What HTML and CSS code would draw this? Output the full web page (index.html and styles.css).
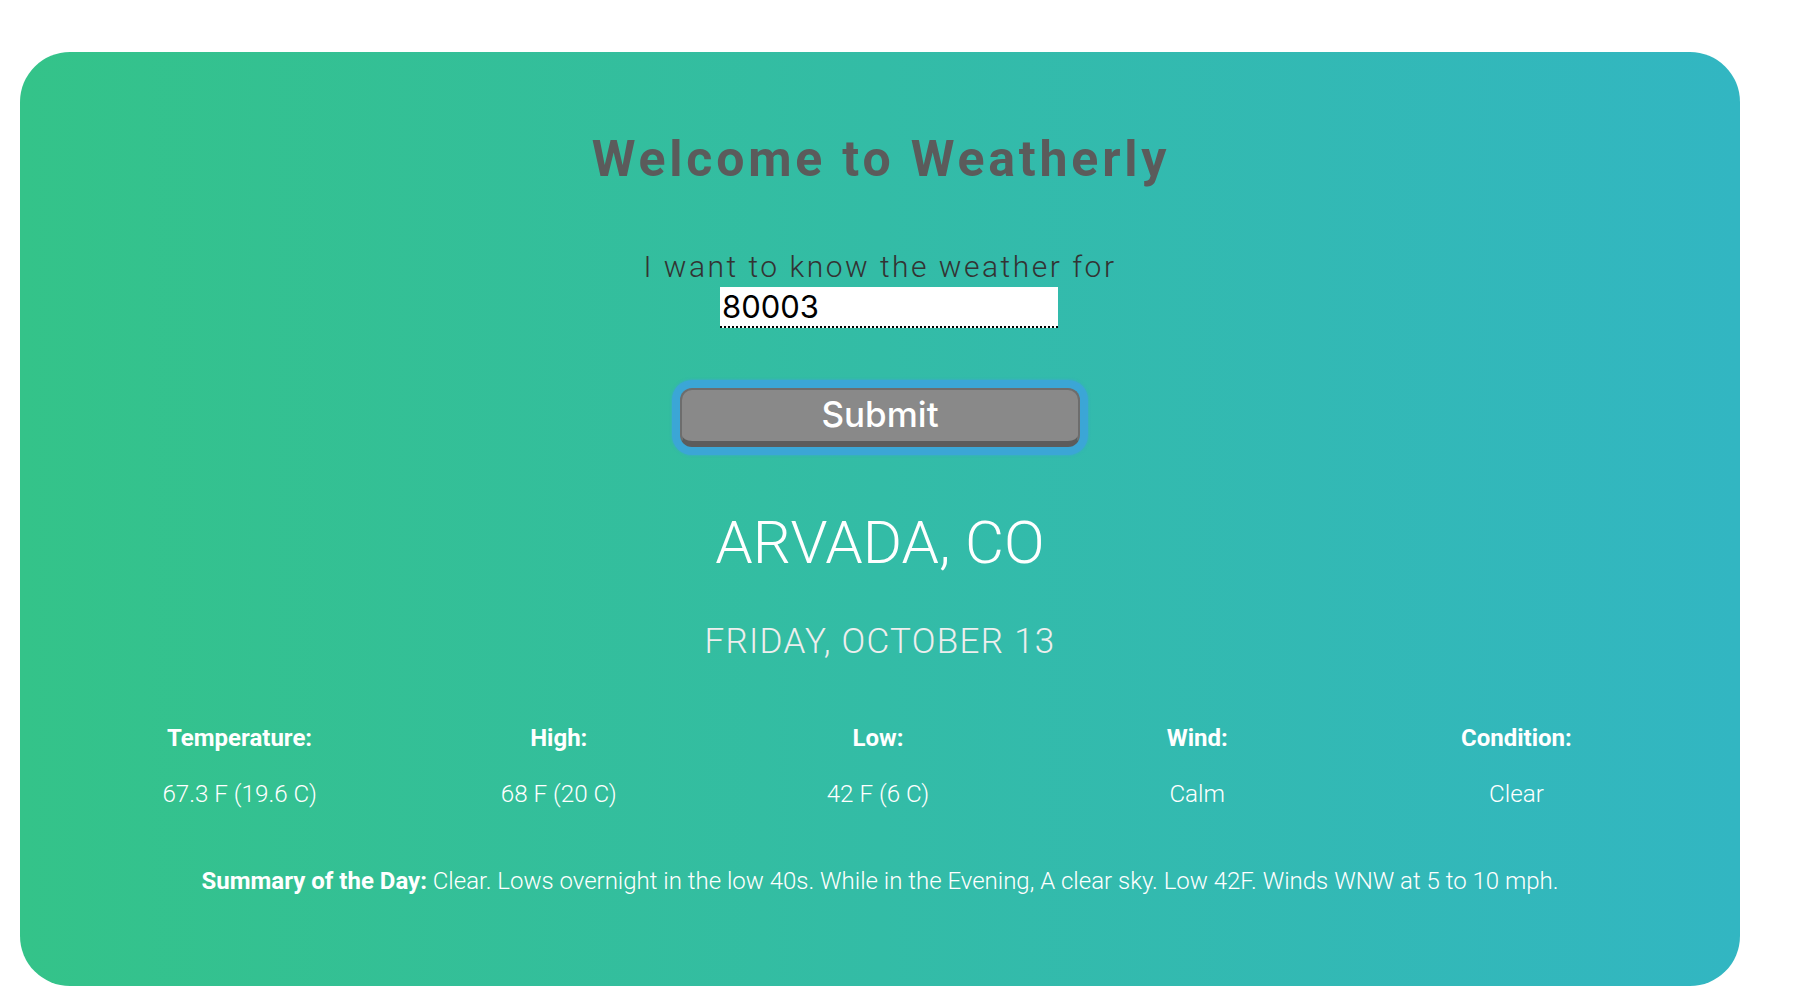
FILE: index.html
```html
<!DOCTYPE html>
<html lang="en">
<head>
<meta charset="utf-8">
<title>Weatherly</title>
<link rel="stylesheet" href="styles.css">
</head>
<body>
<main class="card">
  <h1 class="title">Welcome to Weatherly</h1>
  <form class="search">
    <label class="search-label" for="zip">I want to know the weather for</label>
    <div class="input-row">
      <input class="zip-input" id="zip" type="text" value="80003">
    </div>
    <button class="submit" type="button">Submit</button>
  </form>
  <h2 class="city">ARVADA, CO</h2>
  <h3 class="date">FRIDAY, OCTOBER 13</h3>
  <section class="stats">
    <div class="stat"><div class="stat-label">Temperature:</div><div class="stat-value">67.3 F (19.6 C)</div></div>
    <div class="stat"><div class="stat-label">High:</div><div class="stat-value">68 F (20 C)</div></div>
    <div class="stat"><div class="stat-label">Low:</div><div class="stat-value">42 F (6 C)</div></div>
    <div class="stat"><div class="stat-label">Wind:</div><div class="stat-value">Calm</div></div>
    <div class="stat"><div class="stat-label">Condition:</div><div class="stat-value">Clear</div></div>
  </section>
  <p class="summary"><strong>Summary of the Day:</strong> Clear. Lows overnight in the low 40s. While in the Evening, A clear sky. Low 42F. Winds WNW at 5 to 10 mph.</p>
</main>
</body>
</html>
```

FILE: styles.css
```css
* { box-sizing: border-box; }

html, body {
  margin: 0;
  padding: 0;
  background: #ffffff;
}

body {
  font-family: Roboto, "Liberation Sans", sans-serif;
  padding: 52px 80px 16px 20px;
}

.card {
  width: 1720px;
  height: 934px;
  border-radius: 50px;
  background: linear-gradient(to right, #34c389 0%, #33bca6 50%, #32b6c2 100%);
  padding: 77px 60px 0 60px;
  text-align: center;
}

.title {
  margin: 0;
  font-size: 50px;
  line-height: 60px;
  font-weight: 700;
  letter-spacing: 3.8px;
  color: #5b5b5b;
  padding-left: 2px;
}

.search {
  margin: 0;
  display: flex;
  flex-direction: column;
  align-items: center;
}

.search-label {
  display: block;
  margin-top: 60px;
  font-size: 30px;
  line-height: 36px;
  font-weight: 300;
  letter-spacing: 2.5px;
  color: #333333;
}

.input-row {
  display: flex;
  justify-content: center;
  padding-left: 18px;
  margin-top: 2px;
}

.zip-input {
  width: 338px;
  height: 41px;
  border: none;
  border-bottom: 2px dotted #000000;
  background: #ffffff;
  padding: 0 0 0 2px;
  margin: 0;
  font-family: Inter, "Liberation Sans", sans-serif;
  font-size: 31px;
  color: #000000;
  outline: none;
}

.submit {
  margin-top: 60px;
  width: 400px;
  height: 59px;
  border-radius: 12px;
  background: #898989;
  border: 2px solid #6d6d6d;
  border-bottom: 6px solid #5c5c5c;
  box-shadow: 0 0 0 8px #3ba6d6, 0 0 2px 9px rgba(59, 166, 214, 0.5);
  font-family: Inter, "Liberation Sans", sans-serif;
  font-size: 35px;
  font-weight: 500;
  color: #ffffff;
  line-height: 1;
  padding: 0 0 2px 0;
}

.city {
  margin: 60px 0 0;
  font-size: 60px;
  line-height: 72px;
  font-weight: 300;
  color: #ffffff;
}

.date {
  margin: 42px 0 0;
  font-size: 35px;
  line-height: 42px;
  font-weight: 300;
  letter-spacing: 1.3px;
  color: #eeeeee;
}

.stats {
  margin-top: 60px;
  display: grid;
  grid-template-columns: repeat(5, 1fr);
  padding-right: 4px;
}

.stat-label {
  font-size: 24px;
  line-height: 30px;
  font-weight: 700;
  color: #ffffff;
}

.stat-value {
  margin-top: 26px;
  font-size: 24.2px;
  line-height: 30px;
  font-weight: 300;
  color: #ffffff;
}

.summary {
  margin: 57px 0 0;
  font-size: 24px;
  line-height: 30px;
  font-weight: 300;
  color: #ffffff;
}

.summary strong {
  font-weight: 700;
}
```
